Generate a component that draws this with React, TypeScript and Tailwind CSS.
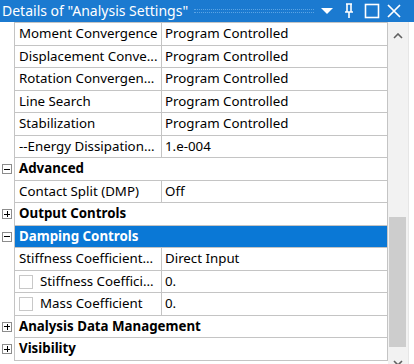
import React from 'react';

type Row =
  | { kind: 'prop'; label: string; value: string; check?: boolean }
  | { kind: 'group'; label: string; open: boolean; selected?: boolean };

const rows: Row[] = [
  { kind: 'prop', label: 'Moment Convergence', value: 'Program Controlled' },
  { kind: 'prop', label: 'Displacement Conve...', value: 'Program Controlled' },
  { kind: 'prop', label: 'Rotation Convergen...', value: 'Program Controlled' },
  { kind: 'prop', label: 'Line Search', value: 'Program Controlled' },
  { kind: 'prop', label: 'Stabilization', value: 'Program Controlled' },
  { kind: 'prop', label: '--Energy Dissipation...', value: '1.e-004' },
  { kind: 'group', label: 'Advanced', open: true },
  { kind: 'prop', label: 'Contact Split (DMP)', value: 'Off' },
  { kind: 'group', label: 'Output Controls', open: false },
  { kind: 'group', label: 'Damping Controls', open: true, selected: true },
  { kind: 'prop', label: 'Stiffness Coefficient...', value: 'Direct Input' },
  { kind: 'prop', label: 'Stiffness Coeffici...', value: '0.', check: true },
  { kind: 'prop', label: 'Mass Coefficient', value: '0.', check: true },
  { kind: 'group', label: 'Analysis Data Management', open: false },
  { kind: 'group', label: 'Visibility', open: false },
];

function ExpandBox({ open }: { open: boolean }) {
  return (
    <div className="relative w-[10px] h-[10px] border border-[#8c8c8c] bg-white">
      <div className="absolute left-[1px] right-[1px] top-[3.5px] h-px bg-black" />
      {!open && <div className="absolute top-[1px] bottom-[1px] left-[3.5px] w-px bg-black" />}
    </div>
  );
}

function TitleBar() {
  return (
    <div className="h-[22px] bg-[#1b7ad0] flex items-center text-white pl-[2px] pr-[13px]">
      <span className="text-[14px] leading-none whitespace-nowrap">Details of "Analysis Settings"</span>
      <div className="flex-1 ml-[6px] mr-[4px] flex flex-col gap-[2px]">
        <div className="border-t border-dotted border-[#5ba4e4]" />
        <div className="border-t border-dotted border-[#5ba4e4]" />
      </div>
      <svg width="14" height="10" viewBox="0 0 14 10" className="ml-[2px]">
        <path d="M1 2 L13 2 L7 8 Z" fill="white" />
      </svg>
      <svg width="12" height="16" viewBox="0 0 12 16" className="ml-[9px]">
        <path d="M3 1 H9 M4 1 V9 M8 1 V9 M2 9 H10 M6 9 V15" stroke="white" strokeWidth="1.6" fill="none" />
      </svg>
      <svg width="16" height="16" viewBox="0 0 16 16" className="ml-[9px]">
        <rect x="1.5" y="1.5" width="13" height="13" stroke="white" strokeWidth="1.6" fill="none" />
      </svg>
      <svg width="14" height="14" viewBox="0 0 14 14" className="ml-[7px]">
        <path d="M1 1 L13 13 M13 1 L1 13" stroke="white" strokeWidth="1.7" />
      </svg>
    </div>
  );
}

function PropRow({ row }: { row: Row }) {
  if (row.kind === 'group') {
    return (
      <div className="flex h-[22.5px]">
        <div className="w-[14px] flex items-center justify-start pl-[2px]">
          <ExpandBox open={row.open} />
        </div>
        <div
          className={
            row.selected
              ? 'w-[374px] border-l border-r border-b border-[#c4c4c4] bg-[#0a78d6] text-white font-bold flex items-center pl-[4px] pt-px'
              : 'w-[374px] border-l border-r border-b border-[#c4c4c4] bg-white text-black font-bold flex items-center pl-[4px] pt-px'
          }
        >
          {row.label}
        </div>
      </div>
    );
  }
  return (
    <div className="flex h-[22.5px]">
      <div className="w-[14px]" />
      <div className="w-[147px] border-l border-b border-[#c4c4c4] flex items-center pl-[4px] pt-px whitespace-nowrap overflow-hidden">
        {row.check && <div className="w-[14px] h-[14px] border border-[#c8c8c8] bg-white mr-[7px] shrink-0" />}
        {row.label}
      </div>
      <div className="w-[227px] border-l border-r border-b border-[#c4c4c4] flex items-center pl-[3px] pt-px whitespace-nowrap">
        {row.value}
      </div>
    </div>
  );
}

function ScrollBar() {
  return (
    <div className="w-[20px] bg-[#f2f2f2] flex flex-col items-center relative">
      <svg width="10" height="6" viewBox="0 0 10 6" className="mt-[11px]">
        <path d="M1 5 L5 1 L9 5" stroke="#606060" strokeWidth="1.6" fill="none" />
      </svg>
      <div className="absolute left-[1px] right-[2px] top-[195px] h-[130px] bg-[#cdcdcd]" />
      <svg width="10" height="6" viewBox="0 0 10 6" className="absolute bottom-[-2px]">
        <path d="M1 1 L5 5 L9 1" stroke="#606060" strokeWidth="1.6" fill="none" />
      </svg>
    </div>
  );
}

export default function App() {
  return (
    <div className="w-[414px] h-[364px] bg-white overflow-hidden text-[13.3px] text-black" style={{ fontFamily: '"Noto Sans", sans-serif' }}>
      <TitleBar />
      <div className="flex">
        <div className="w-[388px] flex flex-col">
          <div className="flex">
            <div className="w-[14px]" />
            <div className="w-[374px] border-t border-[#c4c4c4]" />
          </div>
          {rows.map((row, i) => (
            <PropRow key={i} row={row} />
          ))}
        </div>
        <div className="h-[342px] flex">
          <ScrollBar />
        </div>
        <div className="flex-1 border-l border-[#e6e6e6]" />
      </div>
    </div>
  );
}
